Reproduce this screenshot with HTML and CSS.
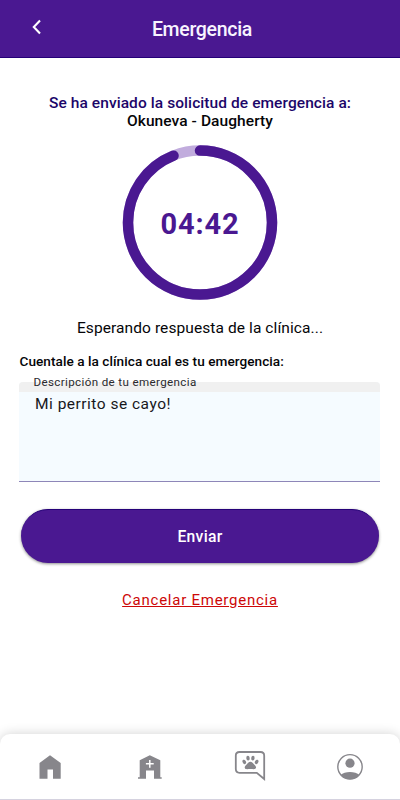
FILE: index.html
```html
<!DOCTYPE html>
<html lang="es">
<head>
<meta charset="utf-8">
<title>Emergencia</title>
<link rel="stylesheet" href="styles.css">
</head>
<body>
<div class="screen">
  <header class="topbar">
    <svg class="back" width="12" height="18" viewBox="0 0 12 18"><path d="M9 2.6 2.8 9 9 15.4"/></svg>
    <h1 class="title">Emergencia</h1>
  </header>
  <main class="content">
    <p class="sent">Se ha enviado la solicitud de emergencia a:</p>
    <p class="clinic">Okuneva - Daugherty</p>
    <div class="timer">
      <svg class="ring" width="156" height="156" viewBox="0 0 156 156">
        <circle class="track" cx="78" cy="77.6" r="72"/>
        <circle class="progress" cx="78" cy="77.6" r="72" pathLength="300" stroke-dasharray="282 300" transform="rotate(-90 78 77.6)"/>
      </svg>
      <span class="time">04:42</span>
    </div>
    <p class="waiting">Esperando respuesta de la clínica...</p>
    <p class="question">Cuentale a la clínica cual es tu emergencia:</p>
    <div class="field">
      <div class="field-top"><span class="label">Descripción de tu emergencia</span></div>
      <div class="field-text">Mi perrito se cayo!</div>
    </div>
    <button class="send"><span class="send-text">Enviar</span></button>
    <a class="cancel">Cancelar Emergencia</a>
  </main>
  <nav class="tabs">
    <div class="tab"><svg width="36" height="36" viewBox="0 0 36 36"><path class="fill" d="M18 7.2 28.7 15V30.8H21V21.5H15.5V30.8H7.5V15Z"/></svg></div>
    <div class="tab"><svg width="36" height="36" viewBox="0 0 36 36"><path class="fill" d="M17.8 7.2 28.3 12.2V29.3H29.7V30.7H22V22.6H14V30.7H6V29.3H7.7V12.2Z"/><path class="cross" d="M17.8 11.9V19.7M13.9 15.8H21.7"/></svg></div>
    <div class="tab"><svg width="36" height="36" viewBox="0 0 36 36"><path class="line" d="M7.5 4H28.5Q32.2 4 32.2 7.7V31L24.8 24.8H7.5Q3.8 24.8 3.8 21.1V7.7Q3.8 4 7.5 4Z"/><g class="fill"><ellipse cx="12.3" cy="13.9" rx="1.7" ry="2.3" transform="rotate(-25 12.3 13.9)"/><ellipse cx="16" cy="10.2" rx="1.7" ry="2.4" transform="rotate(-8 16 10.2)"/><ellipse cx="20.9" cy="10.2" rx="1.7" ry="2.4" transform="rotate(8 20.9 10.2)"/><ellipse cx="24.6" cy="13.9" rx="1.7" ry="2.3" transform="rotate(25 24.6 13.9)"/><path d="M18.4 13.8C20.2 13.8 20.9 15.2 22.2 16.4C23.6 17.6 24.4 18.8 23.9 20.1C23.2 21.9 20.6 21 18.4 21S13.5 21.9 12.8 20.1C12.4 18.8 13.3 17.6 14.6 16.4C15.9 15.2 16.6 13.8 18.4 13.8Z"/></g></svg></div>
    <div class="tab"><svg width="36" height="36" viewBox="0 0 36 36"><path class="fill" d="M8.6 27.1C12.5 23 23.5 23 27.4 27.1C22.8 32.7 13.2 32.7 8.6 27.1Z"/><circle class="fill" cx="18" cy="15.2" r="4.6"/><circle class="outline" cx="18" cy="18.8" r="12.2"/></svg></div>
  </nav>
</div>
</body>
</html>
```
FILE: styles.css
```css
* { box-sizing: border-box; }
body { margin: 0; font-family: Roboto, "Liberation Sans", sans-serif; color: #050508; background: #fff; }
p, h1 { margin: 0; white-space: nowrap; }
svg { display: block; flex: none; }
.screen { height: 800px; display: flex; flex-direction: column; overflow: hidden; }
.topbar { height: 58px; flex: none; background: #4a1891; border-bottom: 1px solid #250078; display: grid; grid-template-columns: 60px 1fr 60px; align-items: center; }
.back { margin: -4px 0 0 31px; fill: none; stroke: #fff; stroke-width: 2.1; }
.title { font-size: 19.5px; line-height: 24px; font-weight: 500; letter-spacing: -.3px; color: #f8f4ff; text-align: center; padding: 2px 0 0 4px; }
.content { flex: 1; display: flex; flex-direction: column; align-items: center; padding: 36px 20px 0; }
.sent, .clinic { font-size: 15.5px; line-height: 18px; font-weight: 500; letter-spacing: .08px; }
.sent { color: #1c0669; }
.timer { display: grid; place-items: center; margin-top: 15px; }
.ring, .time { grid-area: 1 / 1; }
.ring circle { fill: none; stroke-width: 10.5; }
.ring .track { stroke: #c1acdd; }
.ring .progress { stroke: #4a1891; stroke-linecap: round; }
.time { font-size: 29px; line-height: 34px; font-weight: 700; letter-spacing: .9px; color: #4a1891; padding-top: 1px; }
.waiting { margin-top: 17px; font-size: 15.5px; line-height: 20px; letter-spacing: .09px; }
.question { align-self: flex-start; margin: 14px 0 0 -.5px; font-size: 13.6px; line-height: 18px; font-weight: 500; letter-spacing: .05px; }
.field { width: 361px; height: 100px; margin: 12px 1px 0 0; background: #f5fbff; border-bottom: 1px solid #8e86b8; border-radius: 4px 4px 0 0; }
.field-top { height: 10px; background: #f0f0f0; border-radius: 4px 4px 0 0; padding-left: 14.5px; display: flex; align-items: center; }
.label { font-size: 11.6px; line-height: 14px; letter-spacing: .36px; color: #2a2a2e; margin-top: -10px; }
.field-text { padding: 2px 16px; font-size: 15.5px; line-height: 20px; letter-spacing: .5px; color: #17171b; }
.send { flex: none; width: 358px; height: 54px; margin-top: 27px; padding: 0; border: 0; border-top: 1px solid #250078; border-radius: 27px; background: #4a1891; box-shadow: 0 1px 3px rgba(0,0,0,.45); font-family: inherit; color: #fff; }
.send-text { font-size: 15.7px; line-height: 20px; font-weight: 500; letter-spacing: .3px; }
.cancel { margin-top: 27px; font-size: 15px; line-height: 20px; letter-spacing: .75px; color: #cd0808; text-decoration: underline; }
.tabs { flex: none; height: 66px; display: grid; grid-template-columns: repeat(4, 100px); justify-items: center; padding-top: 14px; background: #fff; border-radius: 10px 10px 0 0; border-bottom: 1px solid #d5d2df; box-shadow: 0 0 12px rgba(0,0,0,.18); }
.fill { fill: #87868b; }
.cross { fill: none; stroke: #fff; stroke-width: 1.5; }
.line { fill: none; stroke: #87868b; stroke-width: 1.8; }
.outline { fill: none; stroke: #87868b; stroke-width: 1.4; }
```
